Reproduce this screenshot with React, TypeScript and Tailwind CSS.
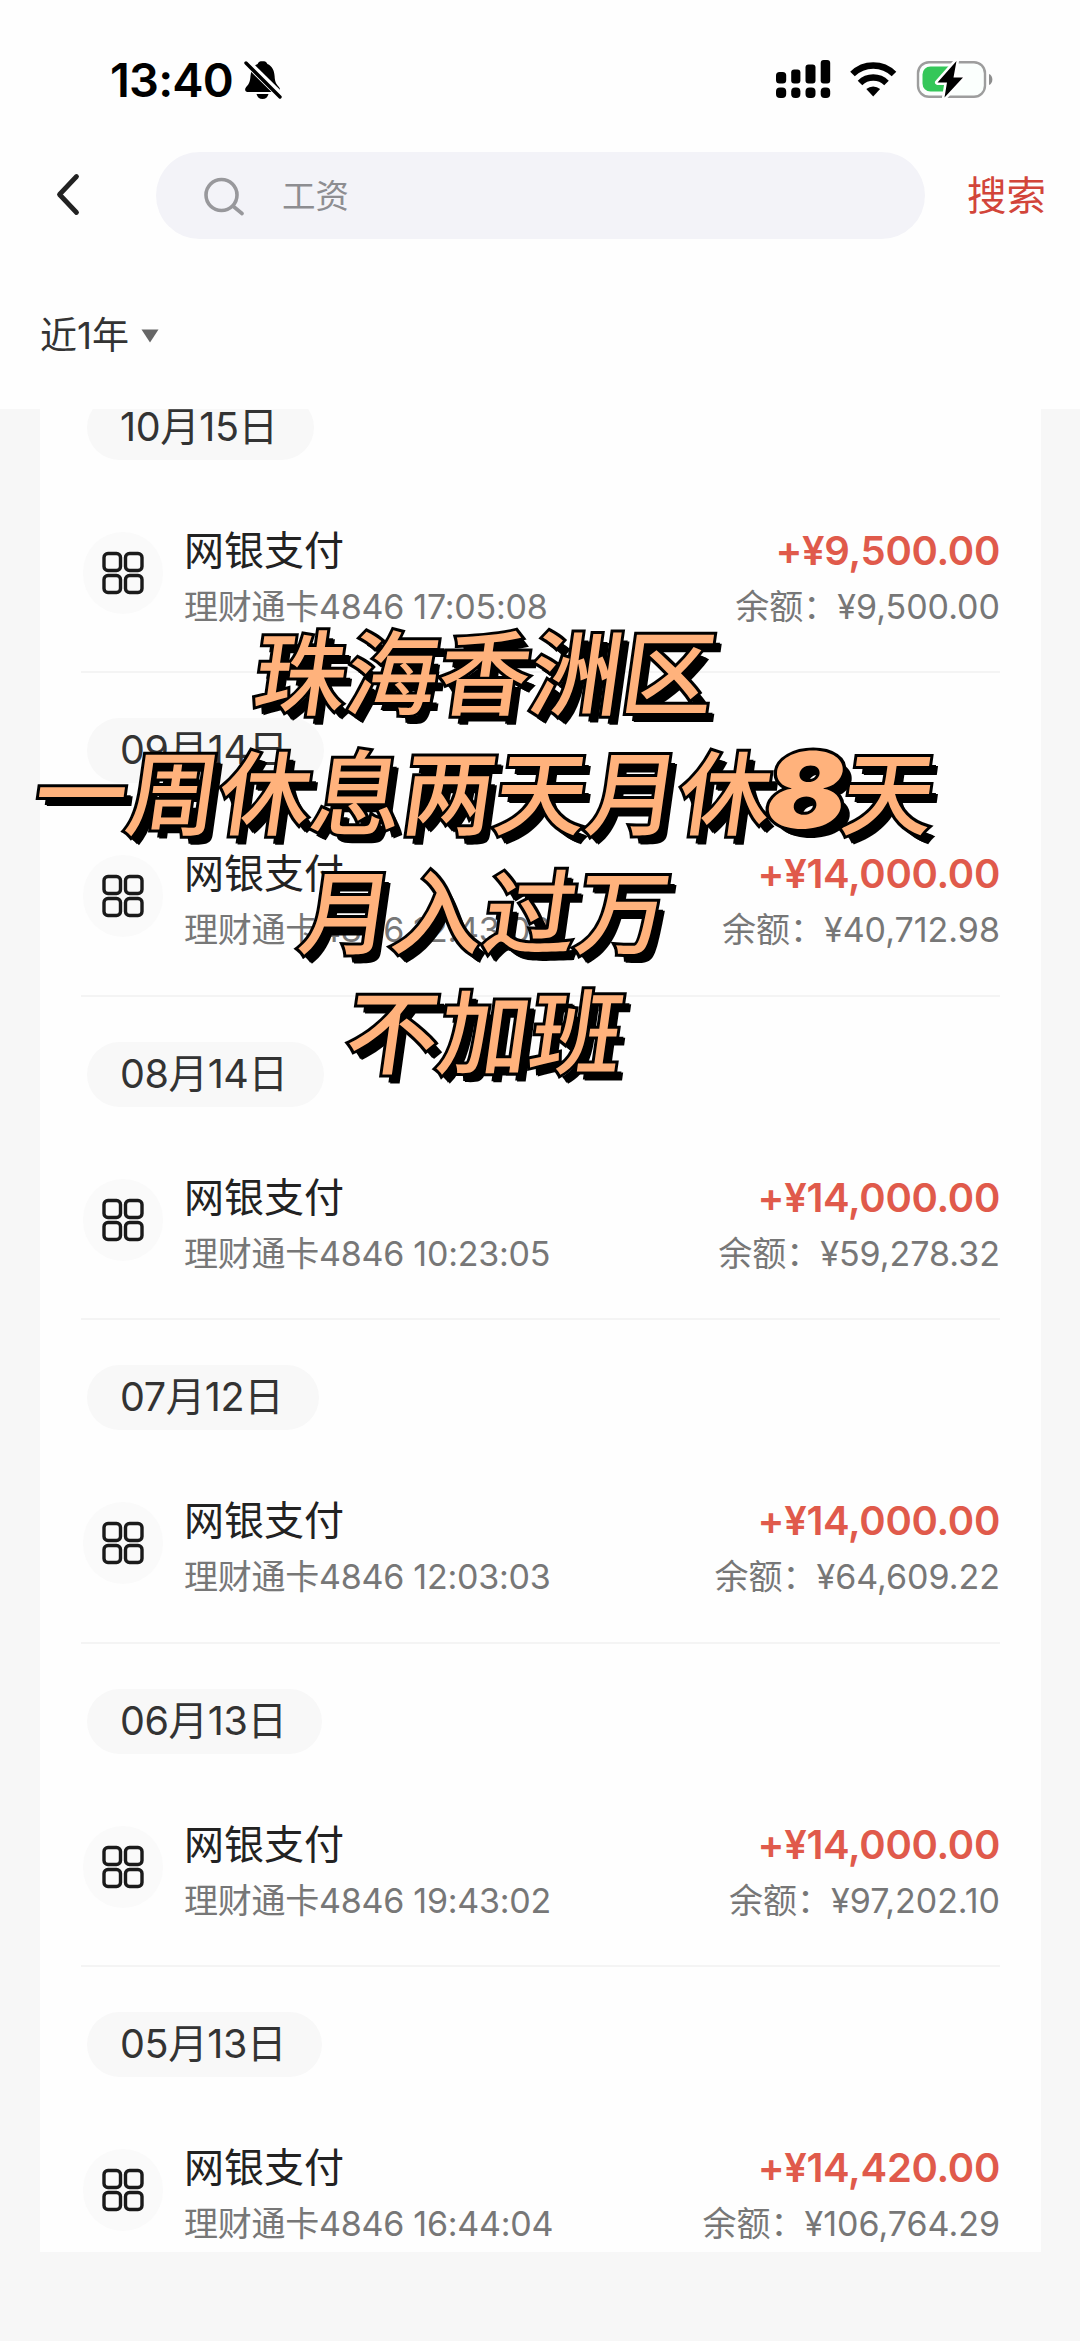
import React from 'react';

type Transaction = {
  date: string;
  time: string;
  amount: string;
  balance: string;
};

const transactions: Transaction[] = [
  { date: '10月15日', time: '17:05:08', amount: '9,500.00', balance: '9,500.00' },
  { date: '09月14日', time: '12:43:03', amount: '14,000.00', balance: '40,712.98' },
  { date: '08月14日', time: '10:23:05', amount: '14,000.00', balance: '59,278.32' },
  { date: '07月12日', time: '12:03:03', amount: '14,000.00', balance: '64,609.22' },
  { date: '06月13日', time: '19:43:02', amount: '14,000.00', balance: '97,202.10' },
  { date: '05月13日', time: '16:44:04', amount: '14,420.00', balance: '106,764.29' },
];

function BellOff() {
  return (
    <svg width="38" height="40" viewBox="0 0 38 40" className="ml-[11px] mt-[60px] shrink-0">
      <path
        d="M18.500 1c-2.600 0-4.200 1.200-4.900 3C9 6 7 10.500 6.500 16c-.4 5.500-1.200 7.800-4.300 11-1.900 2-1.200 5 1.400 5h30c2.500 0 3.100-3 1.300-5-3.200-3.400-4-5.500-4.300-11-.4-5.500-2.400-10-7.200-12-.7-1.800-2.300-3-4.900-3z"
        fill="#000"
      />
      <path d="M12.500 34h12c-.7 3-2.800 5-6 5s-5.300-2-6-5z" fill="#000" />
      <path d="M2.500 2L37 36" stroke="#fff" strokeWidth="7.500" />
      <path d="M2 3L36 37" stroke="#000" strokeWidth="3.400" strokeLinecap="round" />
    </svg>
  );
}

function Signal() {
  return (
    <svg width="56" height="40" viewBox="0 0 56 40">
      <rect x="0" y="13" width="10.200" height="11.500" rx="3.500" />
      <rect x="15.200" y="10.500" width="9.200" height="14" rx="3" />
      <rect x="29.500" y="5.500" width="10" height="19" rx="3" />
      <rect x="44.700" y="1" width="9.500" height="23.500" rx="3" />
      <rect x="0" y="28.500" width="10.200" height="10.500" rx="4" />
      <rect x="15.200" y="28.500" width="9.200" height="10.500" rx="4" />
      <rect x="29.500" y="28.500" width="10" height="10.500" rx="4" />
      <rect x="44.700" y="28.500" width="9.500" height="10.500" rx="4" />
    </svg>
  );
}

function Wifi() {
  return (
    <svg width="48" height="40" viewBox="0 0 48 40" fill="none" stroke="#000">
      <path d="M2.500 15a29.500 29.500 0 0 1 41.500 0" strokeWidth="6.500" />
      <path d="M10 24a19 19 0 0 1 26.500 0" strokeWidth="6.500" />
      <path d="M16.300 30a10.500 10.500 0 0 1 13.800 0L23.200 37.500z" fill="#000" stroke="none" />
    </svg>
  );
}

function Battery() {
  return (
    <svg width="78" height="40" viewBox="0 0 78 40">
      <rect x="2" y="3.200" width="67" height="34.600" rx="11" fill="#fbfffd" stroke="#9d9d9d" strokeWidth="2.400" />
      <path d="M14.500 7.500h22v25h-22a8 8 0 0 1-8-8v-9a8 8 0 0 1 8-8z" fill="#34c759" />
      <path d="M73 15c4.500 1.500 4.500 9.500 0 11z" fill="#8e8e8e" />
      <path
        d="M40.500 2L21.500 23.500H31L28.500 38.500 47 18.500h-9.500z"
        fill="#000"
        stroke="#fff"
        strokeWidth="5"
        strokeLinejoin="round"
        paintOrder="stroke"
      />
    </svg>
  );
}

function StatusBar() {
  return (
    <div className="flex h-[152px] justify-between pr-[86px] pl-[110px]">
      <div className="flex">
        <span className="mt-[50px] text-[47px] leading-[60px] font-semibold tracking-[-0.800px] text-black">13:40</span>
        <BellOff />
      </div>
      <div className="mt-[59px] flex h-10">
        <Signal />
        <span className="ml-[18px]"><Wifi /></span>
        <span className="ml-[18px]"><Battery /></span>
      </div>
    </div>
  );
}

function SearchBar() {
  return (
    <div className="flex h-[87px] items-center">
      <svg width="26" height="44" viewBox="0 0 26 44" className="mb-1 ml-[54px] shrink-0" fill="none">
        <path d="M22.500 4.500L5.500 22.500l17 18" stroke="#222" strokeWidth="4.800" strokeLinecap="round" strokeLinejoin="round" />
      </svg>
      <div className="ml-[76px] flex h-full w-[769px] shrink-0 items-center rounded-full bg-[#f3f3f8] pl-12">
        <svg width="42" height="40" viewBox="0 0 42 40" fill="none" stroke="#98989c" strokeWidth="3.600">
          <circle cx="17.500" cy="19" r="15.500" />
          <path d="M29.500 30.500l8.500 7" strokeLinecap="round" />
        </svg>
        <span className="mt-0.5 ml-9 text-[33.500px] leading-none text-[#8d8d91]">工资</span>
      </div>
      <span className="mt-0.5 ml-[42px] text-[39.500px] leading-none text-[#d2453a]">搜索</span>
    </div>
  );
}

function GridIcon() {
  return (
    <div className="mt-[9px] flex h-[82px] w-20 shrink-0 items-center justify-center rounded-full bg-[#fafafa]">
      <svg width="42" height="44" viewBox="0 0 42 44" fill="none" stroke="#1a1a1a" strokeWidth="3.400">
        <rect x="2" y="2.500" width="16.500" height="17" rx="4" />
        <rect x="23.500" y="2.500" width="16.500" height="17" rx="4" />
        <rect x="2" y="24.500" width="16.500" height="17" rx="4" />
        <rect x="23.500" y="24.500" width="16.500" height="17" rx="4" />
      </svg>
    </div>
  );
}

function TransactionItem({ item }: { item: Transaction }) {
  return (
    <div className="mx-[41px] h-[323.400px] border-b-2 border-[#f4f4f4] pt-[45px] last:border-b-0">
      <div className="ml-1.5 flex h-[65px] w-fit items-center rounded-full bg-[#f8f8f8] pr-9 pl-[33px] text-[39.500px] leading-[35px] tracking-[-0.400px] text-[#333]">
        {item.date}
      </div>
      <div className="mt-[63px] flex leading-[56px]">
        <span className="ml-0.5"><GridIcon /></span>
        <div className="ml-[21px] flex-1">
          <div className="text-[40px] text-[#222]">网银支付</div>
          <div className="text-[34px] tracking-[-0.250px] text-[#777]">理财通卡4846 {item.time}</div>
        </div>
        <div className="text-right">
          <div className="text-[40px] font-semibold tracking-[-0.300px] text-[#e05a4b]">+¥{item.amount}</div>
          <div className="text-[34px] text-[#777]">余额：¥{item.balance}</div>
        </div>
      </div>
    </div>
  );
}

function Caption() {
  return (
    <div className="absolute top-[615px] left-0 z-20 w-[970px] text-center text-[92px] leading-[119.700px] font-medium whitespace-nowrap text-[#ffb27c] [paint-order:stroke_fill] [-webkit-text-stroke:6px_#000] [text-shadow:7px_8px_0_#000,9px_9px_0_#000]">
      <div className="h-[119.700px] -skew-x-8">珠海香洲区</div>
      <div className="h-[119.700px] -skew-x-8">
        一周休息两天月休
        <span className="inline-block scale-x-112 text-[105px] leading-none font-black">8</span>天
      </div>
      <div className="h-[119.700px] -skew-x-8">月入过万</div>
      <div className="h-[119.700px] -skew-x-8">不加班</div>
    </div>
  );
}

export default function App() {
  return (
    <div className="relative h-[2341px] w-[1080px] overflow-hidden bg-[#f7f7f7] font-[Inter,'Noto_Sans_CJK_SC',sans-serif]">
      {/* Header stays above the list, the first date slides under it */}
      <header className="relative z-10 h-[409px] bg-[#fefefe]">
        <StatusBar />
        <SearchBar />
        <div className="mt-[69px] flex items-center pl-10 text-[37px] leading-[56px] text-[#333]">
          近1年
          <svg width="18" height="14" viewBox="0 0 18 14" className="ml-3">
            <path d="M0.500 0.500h17L9 13.500z" fill="#666" />
          </svg>
        </div>
      </header>

      <main className="mx-10 flex h-[1843px] w-[1001px] flex-col bg-[#fefefe]">
        <div className="-mt-[59px]">
          {transactions.map((item) => (
            <TransactionItem key={item.date} item={item} />
          ))}
        </div>
      </main>

      <Caption />
    </div>
  );
}
